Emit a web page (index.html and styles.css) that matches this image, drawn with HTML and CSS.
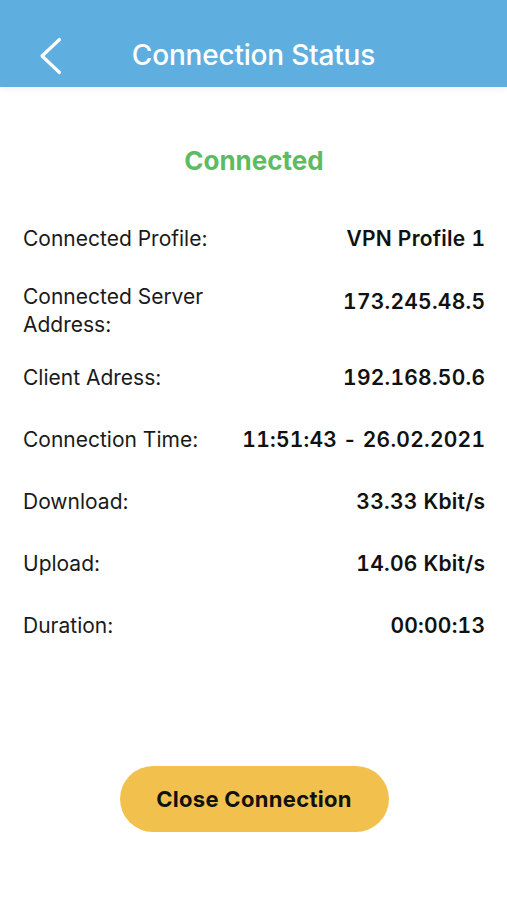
FILE: index.html
```html
<!DOCTYPE html>
<html>
<head>
<meta charset="utf-8">
<link rel="stylesheet" href="styles.css">
</head>
<body>
<header class="topbar">
  <button class="back" aria-label="Back">
    <svg width="24" height="38" viewBox="0 0 24 38"><path d="M20.5 2.5 L3 19 L20.5 35.5" fill="none" stroke="#fff" stroke-width="3.2" stroke-linecap="round" stroke-linejoin="round"/></svg>
  </button>
  <h1 class="title">Connection Status</h1>
</header>
<main class="content">
  <div class="status">Connected</div>
  <div class="list">
    <div class="row"><span class="label">Connected Profile:</span><span class="value">VPN Profile 1</span></div>
    <div class="row row-two"><span class="label">Connected Server<br>Address:</span><span class="value">173.245.48.5</span></div>
    <div class="row"><span class="label">Client Adress:</span><span class="value">192.168.50.6</span></div>
    <div class="row"><span class="label">Connection Time:</span><span class="value">11:51:43 - 26.02.2021</span></div>
    <div class="row"><span class="label">Download:</span><span class="value">33.33 Kbit/s</span></div>
    <div class="row"><span class="label">Upload:</span><span class="value">14.06 Kbit/s</span></div>
    <div class="row"><span class="label">Duration:</span><span class="value">00:00:13</span></div>
  </div>
  <div class="actions">
    <button class="close-btn">Close Connection</button>
  </div>
</main>
</body>
</html>
```
FILE: styles.css
```css
* { box-sizing: border-box; }
html, body { margin: 0; padding: 0; background: #fff; }
body {
  font-family: Inter, "Noto Sans", "Liberation Sans", sans-serif;
  color: #111;
  width: 507px;
  height: 900px;
  overflow: hidden;
}
.topbar {
  position: relative;
  height: 87px;
  background: #5faee0;
  display: flex;
  align-items: center;
  justify-content: center;
  box-shadow: 0 2px 6px rgba(0,0,0,0.06);
}
.back {
  position: absolute;
  left: 39px;
  top: 37px;
  padding: 0;
  border: 0;
  background: none;
  display: flex;
}
.title {
  margin: 0;
  padding-top: 22px;
  color: #fff;
  font-size: 28px;
  font-weight: 500;
  letter-spacing: -0.2px;
}
.content {
  padding: 0 22px 0 23px;
}
.status {
  margin-top: 57px;
  text-align: center;
  color: #5dbb61;
  font-size: 26px;
  font-weight: 700;
  line-height: 34px;
}
.list {
  margin-top: 30px;
  display: flex;
  flex-direction: column;
}
.row {
  display: flex;
  justify-content: space-between;
  align-items: flex-start;
  padding: 17px 0;
  font-size: 21px;
  line-height: 28px;
}
.row-two {
  padding: 13px 0 8px;
}
.row-two .value { margin-top: 5px; }
.label { font-weight: 400; color: #1a1a1a; }
.value {
  font-weight: 600;
  color: #111;
  white-space: nowrap;
  font-variant-numeric: tabular-nums;
  letter-spacing: 0.25px;
  margin-right: -0.25px;
}
.actions {
  display: flex;
  justify-content: center;
  margin-top: 109px;
}
.close-btn {
  width: 269px;
  height: 66px;
  border: 0;
  border-radius: 33px;
  background: #f2c14d;
  font-family: inherit;
  font-size: 22px;
  font-weight: 700;
  letter-spacing: 0.3px;
  color: #111;
}
```
